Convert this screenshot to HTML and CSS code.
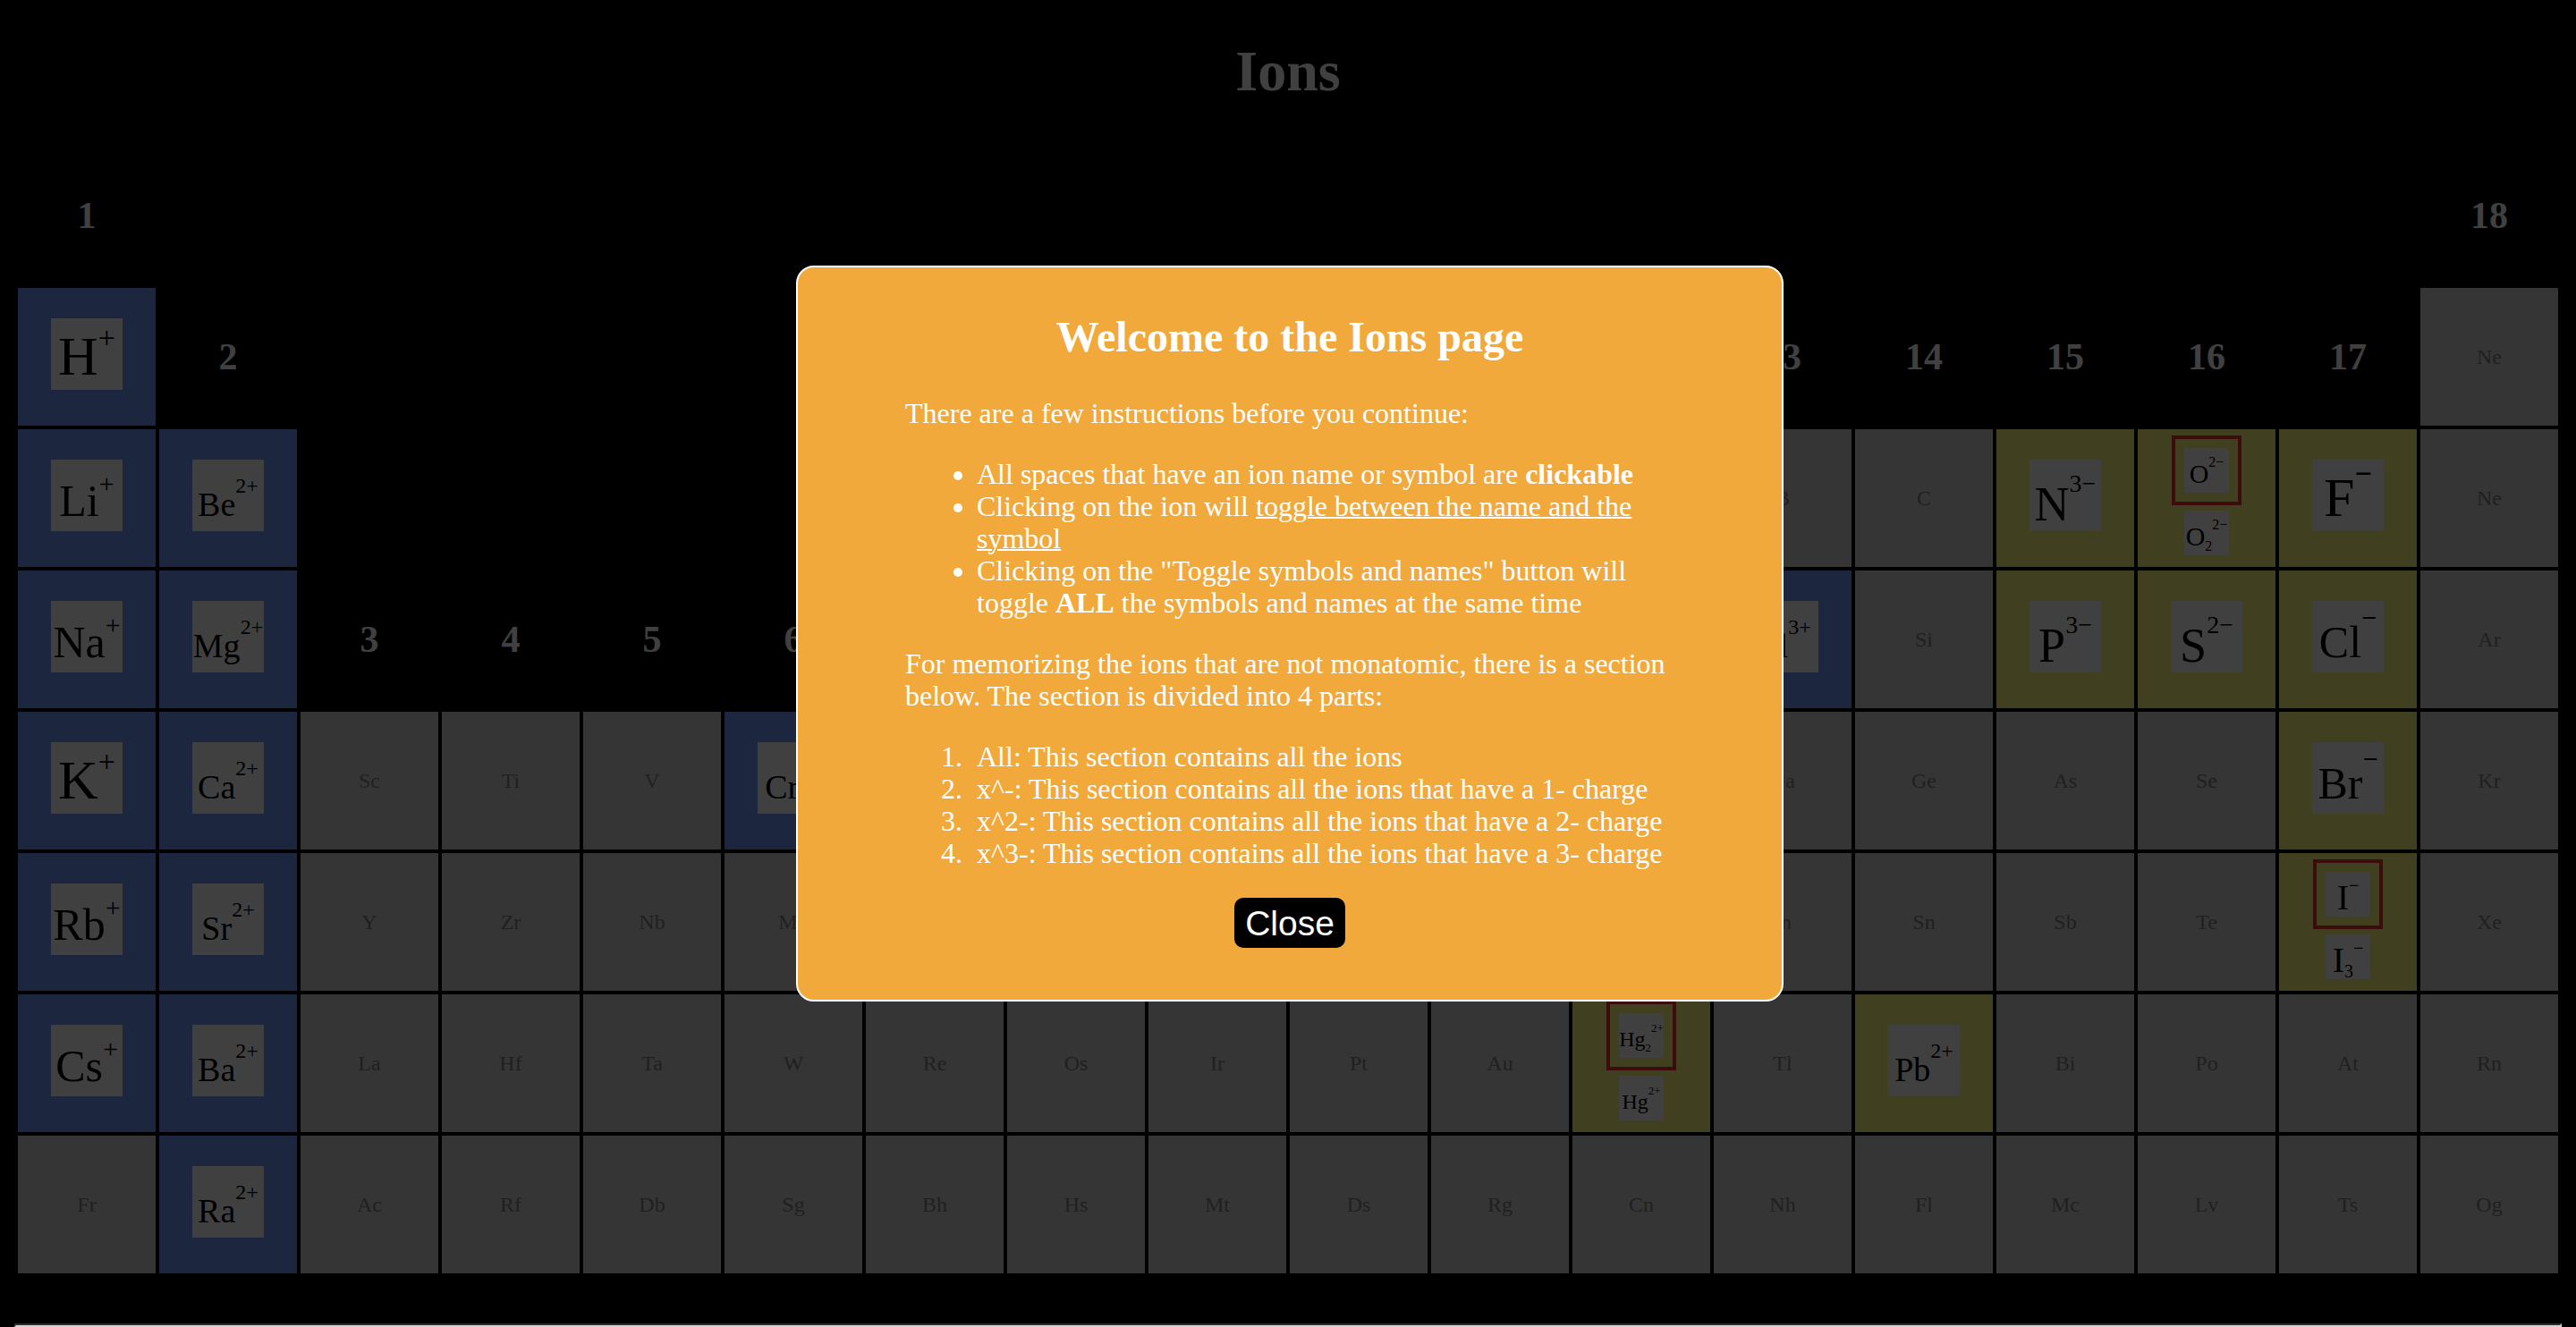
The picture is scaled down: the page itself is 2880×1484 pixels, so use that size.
FILE: index.html
```html
<!DOCTYPE html>
<html lang="en">
<head>
<meta charset="utf-8">
<title>Ions</title>
<link rel="stylesheet" href="styles.css">
</head>
<body>
<h1>Ions</h1>
<table class="periodic">
<tbody id="elements"></tbody>
</table>
<hr class="divider">
<div class="overlay">
<div class="modal" role="dialog" aria-modal="true" aria-labelledby="welcome">
<h2 id="welcome">Welcome to the Ions page</h2>
<p>There are a few instructions before you continue:</p>
<ul>
<li>All spaces that have an ion name or symbol are <b>clickable</b></li>
<li>Clicking on the ion will <u>toggle between the name and the symbol</u></li>
<li>Clicking on the "Toggle symbols and names" button will toggle <b>ALL</b> the symbols and names at the same time</li>
</ul>
<p>For memorizing the ions that are not monatomic, there is a section below. The section is divided into 4 parts:</p>
<ol>
<li>All: This section contains all the ions</li>
<li>x^-: This section contains all the ions that have a 1- charge</li>
<li>x^2-: This section contains all the ions that have a 2- charge</li>
<li>x^3-: This section contains all the ions that have a 3- charge</li>
</ol>
<button type="button" class="close">Close</button>
</div>
</div>
<script src="script.js"></script>
</body>
</html>
```
FILE: styles.css
```css
body {
  margin: 0 16px;
  background: #000;
  color: #fff;
  font-family: "Liberation Serif", "Times New Roman", serif;
}

h1 {
  margin: 0;
  padding: 43px 0;
  font-size: 64px;
  line-height: 74px;
  text-align: center;
}

.periodic {
  width: 100%;
  table-layout: fixed;
  border-spacing: 4px;
}

.periodic th,
.periodic td {
  height: 154px;
  padding: 0;
  text-align: center;
  vertical-align: middle;
}

.periodic th {
  font-size: 42px;
}

.element {
  background: #d3d3d3;
  color: #808080;
  font-size: 24px;
}

.single {
  background: #7398fc;
}

.multiple {
  background: #ffff80;
}

.stack {
  display: flex;
  flex-direction: column;
  align-items: center;
  gap: 6px;
  padding-bottom: 6px;
}

/* Symbol tile. The padding above the line sets how low the symbol sits. */
.ion {
  display: block;
  width: 80px;
  height: 80px;
  padding: 4px 0 0;
  border: 0;
  background: #fff;
  color: #000;
  font-family: inherit;
  font-size: 62px;
  line-height: 76px;
  text-align: center;
  white-space: nowrap;
}

.ion sup,
.ion sub {
  font-size: 34px;
  line-height: 0;
  vertical-align: baseline;
}

.ion sup {
  vertical-align: 30px;
}

.ion sup.minus {
  font-weight: bold;
  vertical-align: 36px;
}

.ion.pair {
  padding-top: 12px;
  font-size: 50px;
  line-height: 68px;
}

.ion.pair sup {
  font-size: 30px;
  vertical-align: 26px;
}

.ion.pair sup.minus {
  vertical-align: 34px;
}

.ion.wide {
  padding-top: 20px;
  font-size: 54px;
  line-height: 60px;
}

.ion.wide sup {
  font-size: 28px;
  vertical-align: 32px;
}

.ion.wide.pair {
  font-size: 38px;
}

.ion.wide.pair sup {
  font-size: 24px;
  vertical-align: 26px;
}

.ion.small {
  width: 50px;
  height: 50px;
  padding-top: 8px;
  font-size: 40px;
  line-height: 42px;
}

.ion.small sup,
.ion.small sub {
  font-size: 20px;
  vertical-align: 20px;
}

.ion.small sub {
  vertical-align: -6px;
}

.ion.small.wide {
  font-size: 30px;
}

.ion.small.wide sup,
.ion.small.wide sub {
  font-size: 16px;
  vertical-align: 18px;
}

.ion.small.wide.pair {
  font-size: 24px;
}

.ion.small.wide.pair sup,
.ion.small.wide.pair sub {
  font-size: 13px;
  vertical-align: 16px;
}

.ion.small.wide sub,
.ion.small.wide.pair sub {
  vertical-align: -6px;
}

.common {
  padding: 10px;
  border: 4px solid #f03030;
}

.divider {
  position: relative;
  z-index: 1;
  margin: 52px 0 0;
  border: 2px solid;
  border-color: #2c2c2c #d4d4d4 #d4d4d4 #2c2c2c;
}

.overlay {
  position: fixed;
  inset: 0;
  display: flex;
  justify-content: center;
  align-items: flex-start;
  padding: 20vh 0 0 4px;
  background: rgba(0, 0, 0, 0.75);
}

.modal {
  width: 860px;
  padding: 51px 120px 58px;
  border: 2px solid #fff;
  border-radius: 20px;
  background: #f1a93b;
  font-size: 32px;
  line-height: 36px;
}

.modal h2 {
  margin: 0 0 40px;
  font-size: 48px;
  line-height: 54px;
  text-align: center;
}

.modal p,
.modal ul,
.modal ol {
  margin: 0 0 32px;
}

.modal ul,
.modal ol {
  padding-left: 80px;
}

.modal ol li::marker {
  content: counter(list-item) ".\00a0\00a0";
}

.modal u {
  text-decoration-thickness: 2px;
}

.close {
  display: block;
  margin: 0 auto;
  padding: 5px 12px 3px;
  border: 0;
  border-radius: 10px;
  background: #000;
  color: #fff;
  font-family: "Liberation Sans", Arial, sans-serif;
  font-size: 39px;
  line-height: 48px;
}
```
FILE: script.js
```js
// "." is an empty space, "#n" a group number, "+" a fixed-charge ion,
// "*" a nonmetal or multi-charge ion; "|" separates a common ion from its variant.
const rows = [
  "#1 . . . . . . . . . . . . . . . . #18",
  "+H^+ #2 . . . . . . . . . . #13 #14 #15 #16 #17 Ne",
  "+Li^+ +Be^2+ . . . . . . . . . . B C *N^3− *O^2−|O_2^2− *F^− Ne",
  "+Na^+ +Mg^2+ #3 #4 #5 #6 #7 #8 #9 #10 #11 #12 +Al^3+ Si *P^3− *S^2− *Cl^− Ar",
  "+K^+ +Ca^2+ Sc Ti V +Cr^3+ Mn Fe Co Ni Cu Zn Ga Ge As Se *Br^− Kr",
  "+Rb^+ +Sr^2+ Y Zr Nb Mo Tc Ru Rh Pd Ag Cd In Sn Sb Te *I^−|I_3^− Xe",
  "+Cs^+ +Ba^2+ La Hf Ta W Re Os Ir Pt Au *Hg_2^2+|Hg^2+ Tl *Pb^2+ Bi Po At Rn",
  "Fr +Ra^2+ Ac Rf Db Sg Bh Hs Mt Ds Rg Cn Nh Fl Mc Lv Ts Og"
];

function ion(text, small) {
  const classes = ["ion"];
  if (/^[A-Z][a-z]/.test(text)) classes.push("pair");
  if (/\^\d/.test(text)) classes.push("wide");
  if (small) classes.push("small");
  const label = text
    .replace(/_(\d)/, "<sub>$1</sub>")
    .replace(/\^−$/, '<sup class="minus">−</sup>')
    .replace(/\^(.+)$/, "<sup>$1</sup>");
  return `<button type="button" class="${classes.join(" ")}">${label}</button>`;
}

function cell(token) {
  if (token === ".") return "<td></td>";
  if (token[0] === "#") return `<th>${token.slice(1)}</th>`;
  if (token[0] !== "+" && token[0] !== "*") return `<td class="element">${token}</td>`;
  const kind = token[0] === "+" ? "single" : "multiple";
  const [main, variant] = token.slice(1).split("|");
  const content = variant
    ? `<div class="common">${ion(main, true)}</div>${ion(variant, true)}`
    : ion(main, false);
  return `<td class="element ${kind}"><div class="stack">${content}</div></td>`;
}

document.getElementById("elements").innerHTML = rows
  .map(row => `<tr>${row.split(" ").map(cell).join("")}</tr>`)
  .join("");
```
